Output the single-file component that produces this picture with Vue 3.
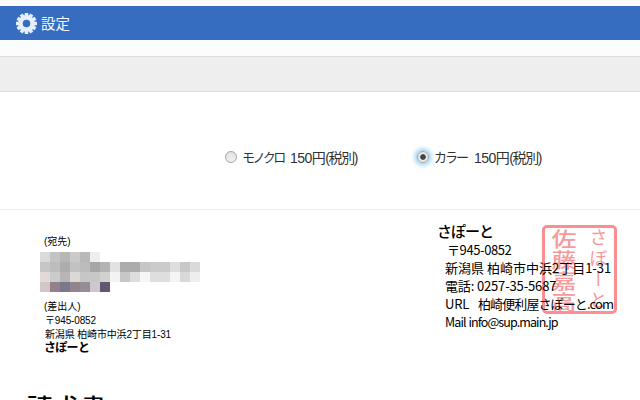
<template>
  <div class="page">
    <header class="title-bar">
      <svg class="gear" viewBox="0 0 20 20">
        <g transform="translate(10 10)">
          <rect v-for="n in 6" :key="n" class="tooth" x="-1.7" y="-10" width="3.4" height="20" :transform="`rotate(${n * 30})`" />
          <circle class="wheel" r="8" />
          <circle class="hole" r="3.6" />
        </g>
      </svg>
      <span class="title-text">設定</span>
    </header>
    <div class="sub-bar"></div>

    <div class="options">
      <label v-for="item in options" :key="item.value" class="option" :class="item.value">
        <span class="radio" :class="{ checked: item.value === selected }" @click="selected = item.value"></span>
        <span class="kind">{{ item.label }}</span>
        <span class="price">150円<i>(税別)</i></span>
      </label>
    </div>

    <main class="sheet">
      <section class="addresses">
        <p class="small to">(宛先)</p>
        <div class="mosaic">
          <div v-for="(row, y) in mosaic" :key="y" class="mosaic-row">
            <span v-for="(color, x) in row" :key="x" class="cell" :style="{ background: color }"></span>
          </div>
        </div>
        <p class="small from">(差出人)</p>
        <p class="small post">〒945-0852</p>
        <p class="small addr">新潟県 柏崎市中浜2丁目1-31</p>
        <p class="small name">さぽーと</p>
      </section>

      <section class="company">
        <h2 class="company-name">さぽーと</h2>
        <p class="line zip">〒945-0852</p>
        <p class="line place">新潟県 柏崎市中浜2丁目1-31</p>
        <p class="line tel">電話: 0257-35-5687</p>
        <p class="line url"><span class="key">URL</span>柏崎便利屋さぽーと.com</p>
        <p class="line mail">Mail info@sup.main.jp</p>
        <div class="stamp">
          <div class="stamp-owner">
            <span v-for="c in '佐藤嘉高'" :key="c">{{ c }}</span>
          </div>
          <div class="stamp-shop">
            <span v-for="c in 'さぼーと'" :key="c">{{ c }}</span>
          </div>
        </div>
      </section>
    </main>
    <h1 class="invoice">請求書</h1>
  </div>
</template>

<script setup>
import { ref } from 'vue'

const selected = ref('color')

const options = [
  { value: 'mono', label: 'モノクロ' },
  { value: 'color', label: 'カラー' }
]

// 宛先を隠すモザイク
const mosaic = [
  ['#dadada', '#c3c3c3', '#b7b7b7', '#cacaca', '#b8b8b8', '#eeeeee'],
  ['#c6c6c6', '#bdbdbd', '#adadad', '#c2c2c2', '#bcbcbc', '#a6a6a6', '#b3b3b3', '#e2e2e2', '#acacac', '#acacac', '#c6c6c6', '#cbcbcb', '#cbcbcb', '#dedede', '#c8c8c8', '#dadada'],
  ['#e2dad9', '#cbcbcb', '#b6b6b6', '#dcd8d6', '#c6c6c6', '#c7c7c7', '#d1d1d1', '#f3f3f3', '#c7c7c7', '#dddddd', '#f6f6f6', '#dedede', '#dedede', '#f4f4f4', '#d8d8d8', '#eeeeee'],
  ['#d3c6c9', '#94808a', '#7b788e', '#92848c', '#978c95', '#cdc8ce', '#61576f']
]
</script>

<style>
body {
  background: #fff;
  overflow: hidden;
}
</style>

<style scoped>
.page {
  width: 640px;
  height: 400px;
  overflow: hidden;
  background: #fff;
  color: #000;
  font-family: "Liberation Sans", "Noto Sans CJK JP", sans-serif;
}
p, h1, h2 {
  margin: 0;
  white-space: nowrap;
}
.title-bar {
  box-sizing: border-box;
  height: 56px;
  padding-left: 16px;
  border-top: 6px solid #fbfdfd;
  border-bottom: 16px solid #fbfdfd;
  background: #366dc0;
  display: flex;
  align-items: center;
}
.gear {
  width: 21px;
  height: 21px;
}
.tooth, .wheel {
  fill: #e6f0fc;
}
.hole {
  fill: #366dc0;
}
.title-text {
  margin-left: 4px;
  padding-top: 2px;
  color: #f4faff;
  font-size: 14.5px;
  line-height: 20px;
}
.sub-bar {
  box-sizing: border-box;
  height: 36px;
  background: #eee;
  border-top: 1px solid #dcdcdc;
  border-bottom: 1px solid #dedede;
}
.options {
  box-sizing: border-box;
  height: 118px;
  padding: 56px 0 0 225px;
  border-bottom: 1px solid #ededed;
  display: flex;
  color: #333;
  font-size: 14px;
  line-height: 20px;
}
.option {
  display: flex;
  height: 20px;
}
.mono {
  width: 192px;
}
.radio {
  box-sizing: border-box;
  width: 12px;
  height: 12px;
  margin: 3px 5px 0 0;
  border: 1px solid #a5a5a5;
  border-radius: 50%;
  background: linear-gradient(#e2e2e2, #f0f0f0);
}
.radio.checked {
  background: radial-gradient(circle, #444 0 2.4px, #e8e8e8 3.2px);
  box-shadow: 0 0 5px 2px #8dc8f3;
}
.kind {
  width: 48px;
  font-size: 13px;
  letter-spacing: -2.6px;
}
.color .kind {
  width: 40px;
  letter-spacing: -2px;
}
.price {
  letter-spacing: -0.5px;
}
.price i {
  font-style: normal;
  letter-spacing: -1.4px;
}
.sheet {
  display: flex;
  height: 184px;
}
.addresses {
  box-sizing: border-box;
  width: 437px;
  padding: 25px 0 0 40px;
}
.small {
  height: 14px;
  padding-left: 4px;
  font-size: 10px;
  line-height: 14px;
}
.to {
  height: 17px;
}
.from {
  margin-top: 8px;
}
.post, .addr {
  padding-left: 5px;
}
.post, .addr {
  letter-spacing: -0.15px;
}
.small.name {
  font-size: 12px;
  font-weight: bold;
  line-height: 13px;
  letter-spacing: -0.7px;
}
.mosaic-row {
  display: flex;
  height: 10px;
}
.cell {
  width: 10px;
}
.company {
  position: relative;
  width: 203px;
  padding-top: 12px;
}
.company-name {
  height: 19px;
  font-size: 15px;
  font-weight: 500;
  line-height: 19px;
  letter-spacing: -1px;
}
.line {
  position: relative;
  z-index: 1;
  height: 18px;
  padding-left: 8px;
  font-family: "Noto Sans CJK JP", sans-serif;
  font-size: 13px;
  line-height: 17px;
}
.zip {
  padding-left: 10px;
  letter-spacing: -0.4px;
}
.place {
  letter-spacing: 0;
}
.tel {
  letter-spacing: -0.15px;
}
.url {
  letter-spacing: -0.9px;
}
.key {
  display: inline-block;
  width: 33px;
  letter-spacing: -0.2px;
}
.mail {
  font-size: 12.5px;
  letter-spacing: -0.9px;
  word-spacing: 1px;
}
/* 印鑑は住所の下に重なる */
.stamp {
  position: absolute;
  left: 105px;
  top: 15px;
  box-sizing: border-box;
  width: 75px;
  height: 89px;
  border: 3px solid #fa8e90;
  border-radius: 5px;
  display: flex;
  color: #f79a9c;
  font-family: "Noto Sans CJK JP", sans-serif;
}
.stamp-owner, .stamp-shop {
  display: grid;
  grid-auto-rows: 21px;
  justify-items: center;
  line-height: 21px;
}
.stamp-owner {
  width: 37px;
  font-size: 20px;
  font-weight: 500;
}
.stamp-owner span {
  transform: scaleX(1.25);
}
.stamp-shop {
  width: 32px;
  font-size: 18px;
}
.stamp-shop span {
  writing-mode: vertical-rl;
}
.invoice {
  padding-left: 26px;
  font-size: 27px;
  line-height: 32px;
  font-weight: 500;
}
</style>
